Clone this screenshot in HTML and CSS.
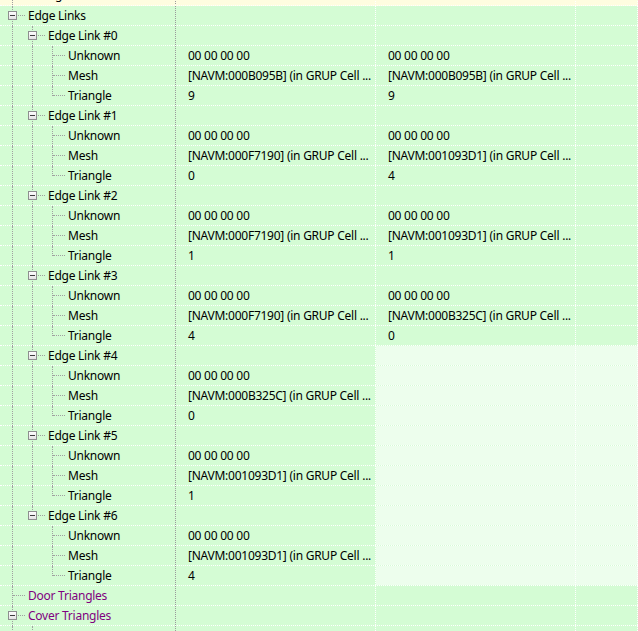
FILE: index.html
```html
<!DOCTYPE html>
<html lang="en">
<head>
<meta charset="UTF-8">
<title>Record View</title>
<link rel="stylesheet" href="styles.css">
</head>
<body>
<div class="grid">
  <div class="row cut yellow">
    <div class="cell name"><span class="g line"></span><span class="label">Triangles</span></div>
    <div class="cell"></div><div class="cell"></div><div class="cell"></div>
  </div>

  <div class="row">
    <div class="cell name"><span class="g tee"><i class="box"></i></span><span class="label">Edge Links</span></div>
    <div class="cell"></div><div class="cell"></div><div class="cell"></div>
  </div>

  <!-- Edge Link #0 -->
  <div class="row">
    <div class="cell name"><span class="g line"></span><span class="g tee"><i class="box"></i></span><span class="label">Edge Link #0</span></div>
    <div class="cell"></div><div class="cell"></div><div class="cell"></div>
  </div>
  <div class="row">
    <div class="cell name"><span class="g line"></span><span class="g line"></span><span class="g tee"></span><span class="label">Unknown</span></div>
    <div class="cell">00 00 00 00</div><div class="cell">00 00 00 00</div><div class="cell"></div>
  </div>
  <div class="row">
    <div class="cell name"><span class="g line"></span><span class="g line"></span><span class="g tee"></span><span class="label">Mesh</span></div>
    <div class="cell">[NAVM:000B095B] (in GRUP Cell ...</div><div class="cell">[NAVM:000B095B] (in GRUP Cell ...</div><div class="cell"></div>
  </div>
  <div class="row">
    <div class="cell name"><span class="g line"></span><span class="g line"></span><span class="g end"></span><span class="label">Triangle</span></div>
    <div class="cell">9</div><div class="cell">9</div><div class="cell"></div>
  </div>

  <!-- Edge Link #1 -->
  <div class="row">
    <div class="cell name"><span class="g line"></span><span class="g tee"><i class="box"></i></span><span class="label">Edge Link #1</span></div>
    <div class="cell"></div><div class="cell"></div><div class="cell"></div>
  </div>
  <div class="row">
    <div class="cell name"><span class="g line"></span><span class="g line"></span><span class="g tee"></span><span class="label">Unknown</span></div>
    <div class="cell">00 00 00 00</div><div class="cell">00 00 00 00</div><div class="cell"></div>
  </div>
  <div class="row">
    <div class="cell name"><span class="g line"></span><span class="g line"></span><span class="g tee"></span><span class="label">Mesh</span></div>
    <div class="cell">[NAVM:000F7190] (in GRUP Cell ...</div><div class="cell">[NAVM:001093D1] (in GRUP Cell ...</div><div class="cell"></div>
  </div>
  <div class="row">
    <div class="cell name"><span class="g line"></span><span class="g line"></span><span class="g end"></span><span class="label">Triangle</span></div>
    <div class="cell">0</div><div class="cell">4</div><div class="cell"></div>
  </div>

  <!-- Edge Link #2 -->
  <div class="row">
    <div class="cell name"><span class="g line"></span><span class="g tee"><i class="box"></i></span><span class="label">Edge Link #2</span></div>
    <div class="cell"></div><div class="cell"></div><div class="cell"></div>
  </div>
  <div class="row">
    <div class="cell name"><span class="g line"></span><span class="g line"></span><span class="g tee"></span><span class="label">Unknown</span></div>
    <div class="cell">00 00 00 00</div><div class="cell">00 00 00 00</div><div class="cell"></div>
  </div>
  <div class="row">
    <div class="cell name"><span class="g line"></span><span class="g line"></span><span class="g tee"></span><span class="label">Mesh</span></div>
    <div class="cell">[NAVM:000F7190] (in GRUP Cell ...</div><div class="cell">[NAVM:001093D1] (in GRUP Cell ...</div><div class="cell"></div>
  </div>
  <div class="row">
    <div class="cell name"><span class="g line"></span><span class="g line"></span><span class="g end"></span><span class="label">Triangle</span></div>
    <div class="cell">1</div><div class="cell">1</div><div class="cell"></div>
  </div>

  <!-- Edge Link #3 -->
  <div class="row">
    <div class="cell name"><span class="g line"></span><span class="g tee"><i class="box"></i></span><span class="label">Edge Link #3</span></div>
    <div class="cell"></div><div class="cell"></div><div class="cell"></div>
  </div>
  <div class="row">
    <div class="cell name"><span class="g line"></span><span class="g line"></span><span class="g tee"></span><span class="label">Unknown</span></div>
    <div class="cell">00 00 00 00</div><div class="cell">00 00 00 00</div><div class="cell"></div>
  </div>
  <div class="row">
    <div class="cell name"><span class="g line"></span><span class="g line"></span><span class="g tee"></span><span class="label">Mesh</span></div>
    <div class="cell">[NAVM:000F7190] (in GRUP Cell ...</div><div class="cell">[NAVM:000B325C] (in GRUP Cell ...</div><div class="cell"></div>
  </div>
  <div class="row">
    <div class="cell name"><span class="g line"></span><span class="g line"></span><span class="g end"></span><span class="label">Triangle</span></div>
    <div class="cell">4</div><div class="cell">0</div><div class="cell"></div>
  </div>

  <!-- Edge Link #4..#6 only exist in the first file -->
  <div class="row">
    <div class="cell name"><span class="g line"></span><span class="g tee"><i class="box"></i></span><span class="label">Edge Link #4</span></div>
    <div class="cell"></div><div class="cell blank"></div><div class="cell blank"></div>
  </div>
  <div class="row">
    <div class="cell name"><span class="g line"></span><span class="g line"></span><span class="g tee"></span><span class="label">Unknown</span></div>
    <div class="cell">00 00 00 00</div><div class="cell blank"></div><div class="cell blank"></div>
  </div>
  <div class="row">
    <div class="cell name"><span class="g line"></span><span class="g line"></span><span class="g tee"></span><span class="label">Mesh</span></div>
    <div class="cell">[NAVM:000B325C] (in GRUP Cell ...</div><div class="cell blank"></div><div class="cell blank"></div>
  </div>
  <div class="row">
    <div class="cell name"><span class="g line"></span><span class="g line"></span><span class="g end"></span><span class="label">Triangle</span></div>
    <div class="cell">0</div><div class="cell blank"></div><div class="cell blank"></div>
  </div>

  <div class="row">
    <div class="cell name"><span class="g line"></span><span class="g tee"><i class="box"></i></span><span class="label">Edge Link #5</span></div>
    <div class="cell"></div><div class="cell blank"></div><div class="cell blank"></div>
  </div>
  <div class="row">
    <div class="cell name"><span class="g line"></span><span class="g line"></span><span class="g tee"></span><span class="label">Unknown</span></div>
    <div class="cell">00 00 00 00</div><div class="cell blank"></div><div class="cell blank"></div>
  </div>
  <div class="row">
    <div class="cell name"><span class="g line"></span><span class="g line"></span><span class="g tee"></span><span class="label">Mesh</span></div>
    <div class="cell">[NAVM:001093D1] (in GRUP Cell ...</div><div class="cell blank"></div><div class="cell blank"></div>
  </div>
  <div class="row">
    <div class="cell name"><span class="g line"></span><span class="g line"></span><span class="g end"></span><span class="label">Triangle</span></div>
    <div class="cell">1</div><div class="cell blank"></div><div class="cell blank"></div>
  </div>

  <div class="row">
    <div class="cell name"><span class="g line"></span><span class="g end"><i class="box"></i></span><span class="label">Edge Link #6</span></div>
    <div class="cell"></div><div class="cell blank"></div><div class="cell blank"></div>
  </div>
  <div class="row">
    <div class="cell name"><span class="g line"></span><span class="g"></span><span class="g tee"></span><span class="label">Unknown</span></div>
    <div class="cell">00 00 00 00</div><div class="cell blank"></div><div class="cell blank"></div>
  </div>
  <div class="row">
    <div class="cell name"><span class="g line"></span><span class="g"></span><span class="g tee"></span><span class="label">Mesh</span></div>
    <div class="cell">[NAVM:001093D1] (in GRUP Cell ...</div><div class="cell blank"></div><div class="cell blank"></div>
  </div>
  <div class="row">
    <div class="cell name"><span class="g line"></span><span class="g"></span><span class="g end"></span><span class="label">Triangle</span></div>
    <div class="cell">4</div><div class="cell blank"></div><div class="cell blank"></div>
  </div>

  <div class="row">
    <div class="cell name"><span class="g tee"></span><span class="label purple">Door Triangles</span></div>
    <div class="cell"></div><div class="cell"></div><div class="cell"></div>
  </div>
  <div class="row">
    <div class="cell name"><span class="g tee"><i class="box"></i></span><span class="label purple">Cover Triangles</span></div>
    <div class="cell"></div><div class="cell"></div><div class="cell"></div>
  </div>
  <div class="row">
    <div class="cell name"><span class="g line"></span><span class="g tee"></span></div>
    <div class="cell"></div><div class="cell"></div><div class="cell"></div>
  </div>
</div>
</body>
</html>
```

FILE: styles.css
```css
html, body {
  margin: 0;
  padding: 0;
  background: #d4fcd4;
  overflow: hidden;
  font-family: "Segoe UI", "Noto Sans", sans-serif;
  font-size: 12px;
  letter-spacing: -0.25px;
  color: #000;
}
.grid {
  display: flex;
  flex-direction: column;
}
.row {
  display: grid;
  grid-template-columns: 176px 200px 200px 1fr;
  height: 20px;
  border-bottom: 1px dotted #fff;
  box-sizing: border-box;
  background: #d4fcd4;
}
.row.yellow {
  background: #fffde0;
}
/* partial row scrolled off the top */
.row.cut {
  height: 6px;
  overflow: hidden;
}
.row.cut .cell {
  margin-top: -15px;
}
.cell {
  height: 19px;
  line-height: 19px;
  padding-left: 12px;
  border-right: 1px dotted #fff;
  box-sizing: border-box;
  white-space: nowrap;
  overflow: hidden;
}
.cell.blank {
  background: #edfeed;
}
.cell.name {
  display: flex;
  padding-left: 2px;
  border-right: 1px dotted #9a9a9a;
  overflow: visible;
}
.label {
  margin-left: 6px;
}
.label.purple {
  color: #800080;
}
/* tree guide slots, 20px per level */
.g {
  position: relative;
  flex: none;
  width: 20px;
  height: 19px;
}
.g.line::before,
.g.tee::before,
.g.end::before {
  content: '';
  position: absolute;
  left: 10px;
  top: 0;
  bottom: -1px;
  border-left: 1px dotted #a0a0a0;
}
.g.end::before {
  bottom: auto;
  height: 10px;
}
.g.tee::after,
.g.end::after {
  content: '';
  position: absolute;
  left: 11px;
  top: 9px;
  width: 12px;
  border-top: 1px dotted #a0a0a0;
}
.box {
  position: absolute;
  left: 6px;
  top: 5px;
  width: 9px;
  height: 9px;
  box-sizing: border-box;
  border: 1px solid #8e8f8f;
  background: linear-gradient(#fdfdfd, #e4e4e4);
  z-index: 1;
}
.box::after {
  content: '';
  position: absolute;
  left: 1px;
  top: 3px;
  width: 5px;
  height: 1px;
  background: #3c3c3c;
}
```
